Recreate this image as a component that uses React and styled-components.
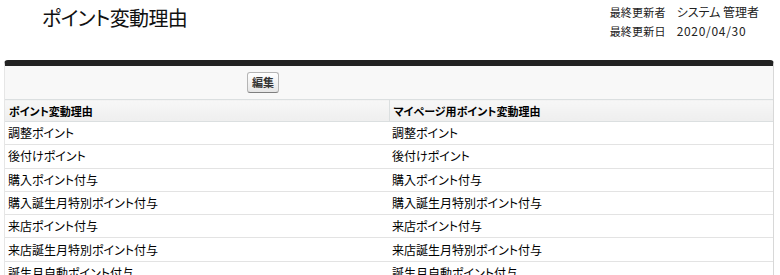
import React from "react";
import styled, { createGlobalStyle } from "styled-components";

const Global = createGlobalStyle`
  html, body { margin: 0; padding: 0; background: #fff; }
  body {
    font-family: "Noto Sans CJK JP", "Liberation Sans", sans-serif;
    color: #000;
    font-feature-settings: "palt";
  }
  button, table { font-feature-settings: "palt"; }
`;

const Page = styled.div`
  width: 780px;
`;

const TopBar = styled.div`
  display: flex;
  justify-content: space-between;
  align-items: flex-start;
  height: 60px;
  padding: 0 21px 0 42px;
  box-sizing: border-box;
`;

const Title = styled.h1`
  margin: 7px 0 0;
  font-family: "Noto Sans CJK JP", sans-serif;
  font-size: 20px;
  line-height: 22px;
  font-weight: 400;
  letter-spacing: -0.6px;
  color: #111;
`;

const Meta = styled.dl`
  margin: 3px 0 0;
  display: grid;
  grid-template-columns: auto auto;
  column-gap: 11px;
  row-gap: 1px;
  font-family: "Noto Sans CJK JP", sans-serif;
  font-size: 12px;
  line-height: 18px;
  color: #222;
  dt, dd { margin: 0; }
`;

const MetaLabel = styled.dt`
  font-size: 11px;
  letter-spacing: 0.2px;
`;

const MetaValue = styled.dd`
  letter-spacing: ${(p) => (p.$numeric ? "0.7px" : "0")};
`;

const Panel = styled.section`
  margin: 0 6px 0 4px;
  border-top: 6px solid #222;
  border-radius: 4px 4px 0 0;
  background: #f8f8f8;
  border-left: 1px solid #e6e6e6;
  border-right: 1px solid #d8d8d8;
`;

const ButtonRow = styled.div`
  display: flex;
  align-items: center;
  height: 33px;
  padding-left: 242px;
`;

const Button = styled.button`
  height: 21px;
  padding: 0 4px;
  border: 1px solid #b5b5b5;
  border-bottom-color: #7f7f7f;
  border-radius: 3px;
  background: linear-gradient(#ffffff, #e6e6e6);
  font-family: "Noto Sans CJK JP", sans-serif;
  font-size: 11px;
  font-weight: 700;
  color: #333;
  line-height: 17px;
`;

const Table = styled.table`
  width: 100%;
  border-collapse: collapse;
  background: #fff;
  font-family: "Noto Sans CJK JP", sans-serif;
`;

const Th = styled.th`
  text-align: left;
  height: 21px;
  padding: 0 0 0 4px;
  background: linear-gradient(#f7f7f7, #eeeeee);
  border-top: 1px solid #dbdfe0;
  border-bottom: 1px solid #dbdfe0;
  border-left: ${(p) => (p.$divider ? "1px solid #dbdfe0" : "none")};
  font-size: 11px;
  font-weight: 700;
  color: #000;
  width: 50%;
`;

const Td = styled.td`
  height: 22.3px;
  padding: 0 0 0 3px;
  border-bottom: 1px solid #e3e3e3;
  font-size: 12px;
  color: #000;
  line-height: 16px;
`;

const rows = [
  "調整ポイント",
  "後付けポイント",
  "購入ポイント付与",
  "購入誕生月特別ポイント付与",
  "来店ポイント付与",
  "来店誕生月特別ポイント付与",
  "誕生月自動ポイント付与",
];

export default function App() {
  return (
    <Page>
      <Global />
      <TopBar>
        <Title>ポイント変動理由</Title>
        <Meta>
          <MetaLabel>最終更新者</MetaLabel>
          <MetaValue>システム 管理者</MetaValue>
          <MetaLabel>最終更新日</MetaLabel>
          <MetaValue $numeric>2020/04/30</MetaValue>
        </Meta>
      </TopBar>
      <Panel>
        <ButtonRow>
          <Button>編集</Button>
        </ButtonRow>
        <Table>
          <thead>
            <tr>
              <Th>ポイント変動理由</Th>
              <Th $divider>マイページ用ポイント変動理由</Th>
            </tr>
          </thead>
          <tbody>
            {rows.map((r) => (
              <tr key={r}>
                <Td>{r}</Td>
                <Td>{r}</Td>
              </tr>
            ))}
          </tbody>
        </Table>
      </Panel>
    </Page>
  );
}
